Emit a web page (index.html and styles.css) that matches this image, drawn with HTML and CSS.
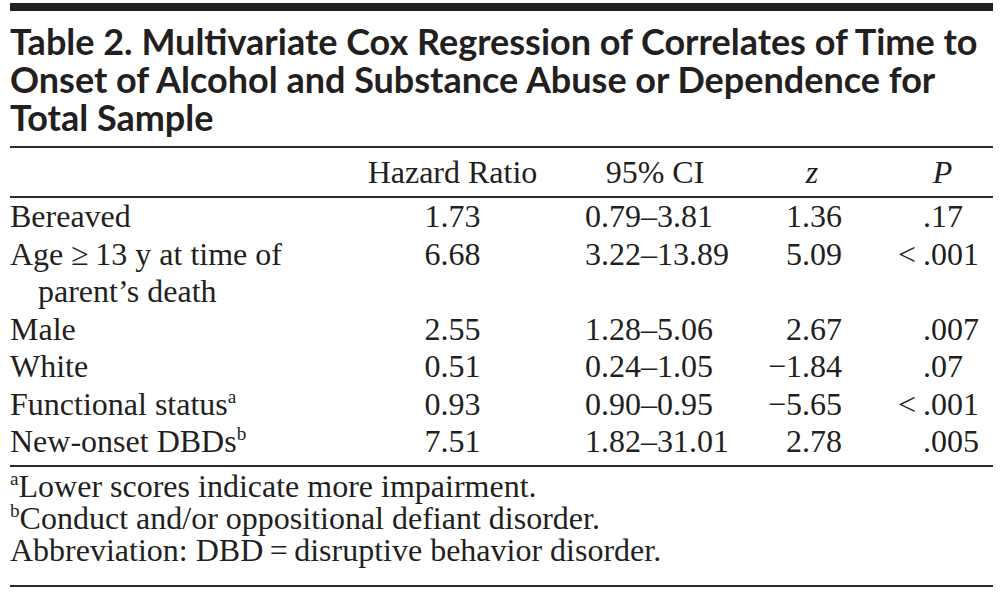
FILE: index.html
```html
<!DOCTYPE html>
<html lang="en">
<head>
<meta charset="utf-8">
<title>Table 2</title>
<link rel="stylesheet" href="styles.css">
</head>
<body>
<div class="page">
  <div class="topbar"></div>
  <h1 class="title">Table 2. Multivariate Cox Regression of Correlates of Time to<br>Onset of Alcohol and Substance Abuse or Dependence for<br>Total Sample</h1>
  <table class="data">
    <colgroup>
      <col class="c-label">
      <col class="c-hr">
      <col class="c-ci">
      <col class="c-z">
      <col class="c-p">
    </colgroup>
    <thead>
      <tr>
        <th class="label"></th>
        <th class="hr">Hazard Ratio</th>
        <th class="ci">95% CI</th>
        <th class="z"><i>z</i></th>
        <th class="p"><i>P</i></th>
      </tr>
    </thead>
    <tbody>
      <tr>
        <td class="label">Bereaved</td>
        <td class="hr">1.73</td>
        <td class="ci">0.79–3.81</td>
        <td class="z">1.36</td>
        <td class="p">.17</td>
      </tr>
      <tr>
        <td class="label">Age ≥&thinsp;13 y at time of parent’s death</td>
        <td class="hr">6.68</td>
        <td class="ci">3.22–13.89</td>
        <td class="z">5.09</td>
        <td class="p"><span class="lt">&lt;</span>.001</td>
      </tr>
      <tr>
        <td class="label">Male</td>
        <td class="hr">2.55</td>
        <td class="ci">1.28–5.06</td>
        <td class="z">2.67</td>
        <td class="p">.007</td>
      </tr>
      <tr>
        <td class="label">White</td>
        <td class="hr">0.51</td>
        <td class="ci">0.24–1.05</td>
        <td class="z">−1.84</td>
        <td class="p">.07</td>
      </tr>
      <tr>
        <td class="label">Functional status<span class="sup">a</span></td>
        <td class="hr">0.93</td>
        <td class="ci">0.90–0.95</td>
        <td class="z">−5.65</td>
        <td class="p"><span class="lt">&lt;</span>.001</td>
      </tr>
      <tr class="last">
        <td class="label">New-onset DBDs<span class="sup">b</span></td>
        <td class="hr">7.51</td>
        <td class="ci">1.82–31.01</td>
        <td class="z">2.78</td>
        <td class="p">.005</td>
      </tr>
    </tbody>
  </table>
  <div class="notes">
    <p><span class="sup">a</span>Lower scores indicate more impairment.</p>
    <p><span class="sup">b</span>Conduct and/or oppositional defiant disorder.</p>
    <p>Abbreviation: DBD&thinsp;=&thinsp;disruptive behavior disorder.</p>
  </div>
</div>
</body>
</html>
```

FILE: styles.css
```css
html, body {
  margin: 0;
  padding: 0;
  background: #ffffff;
}

.page {
  width: 983px;
  margin-left: 10px;
  padding-top: 3px;
  color: #231f20;
  font-family: "Liberation Serif", "Times New Roman", serif;
}

.topbar {
  height: 8px;
  background: #231f20;
}

.title {
  margin: 11px 0 0 0;
  padding-bottom: 10px;
  font-family: Lato, "Open Sans", sans-serif;
  font-weight: 700;
  font-size: 36px;
  line-height: 38px;
  color: #231f20;
  border-bottom: 2px solid #2b2b2b;
}

.data {
  width: 983px;
  table-layout: fixed;
  border-collapse: collapse;
  font-size: 32px;
}

.c-label { width: 350px; }
.c-hr { width: 185px; }
.c-ci { width: 180px; }
.c-z { width: 117px; }
.c-p { width: 151px; }

.data th {
  font-weight: 400;
  line-height: 36px;
  padding: 6px 0 6px 0;
  white-space: nowrap;
  border-bottom: 2px solid #2b2b2b;
}

.data td {
  line-height: 37.5px;
  padding: 0;
  vertical-align: top;
}

.data tr.last td {
  padding-bottom: 4px;
  border-bottom: 2px solid #2b2b2b;
}

.data td.label {
  text-align: left;
  padding-left: 28px;
  text-indent: -28px;
}

.data td.hr,
.data td.ci,
.data td.z,
.data td.p {
  white-space: nowrap;
}

.data .hr { text-align: center; }

.data td.ci { text-align: left; padding-left: 40px; }
.data th.ci { text-align: center; padding-left: 40px; }

.data td.z { text-align: right; }
.data th.z { text-align: center; padding-left: 57px; }

.data td.p { text-align: left; padding-left: 81px; }
.data th.p { text-align: center; padding-left: 58px; padding-right: 8px; }

.lt {
  display: inline-block;
  width: 25px;
  margin-left: -25px;
  text-align: left;
}

.sup {
  font-size: 0.6em;
  line-height: 0;
  vertical-align: 0.6em;
}

.notes {
  padding: 3px 0 19px 0;
  border-bottom: 2px solid #2b2b2b;
  font-size: 32px;
}

.notes p {
  margin: 0;
  line-height: 32px;
}
```
